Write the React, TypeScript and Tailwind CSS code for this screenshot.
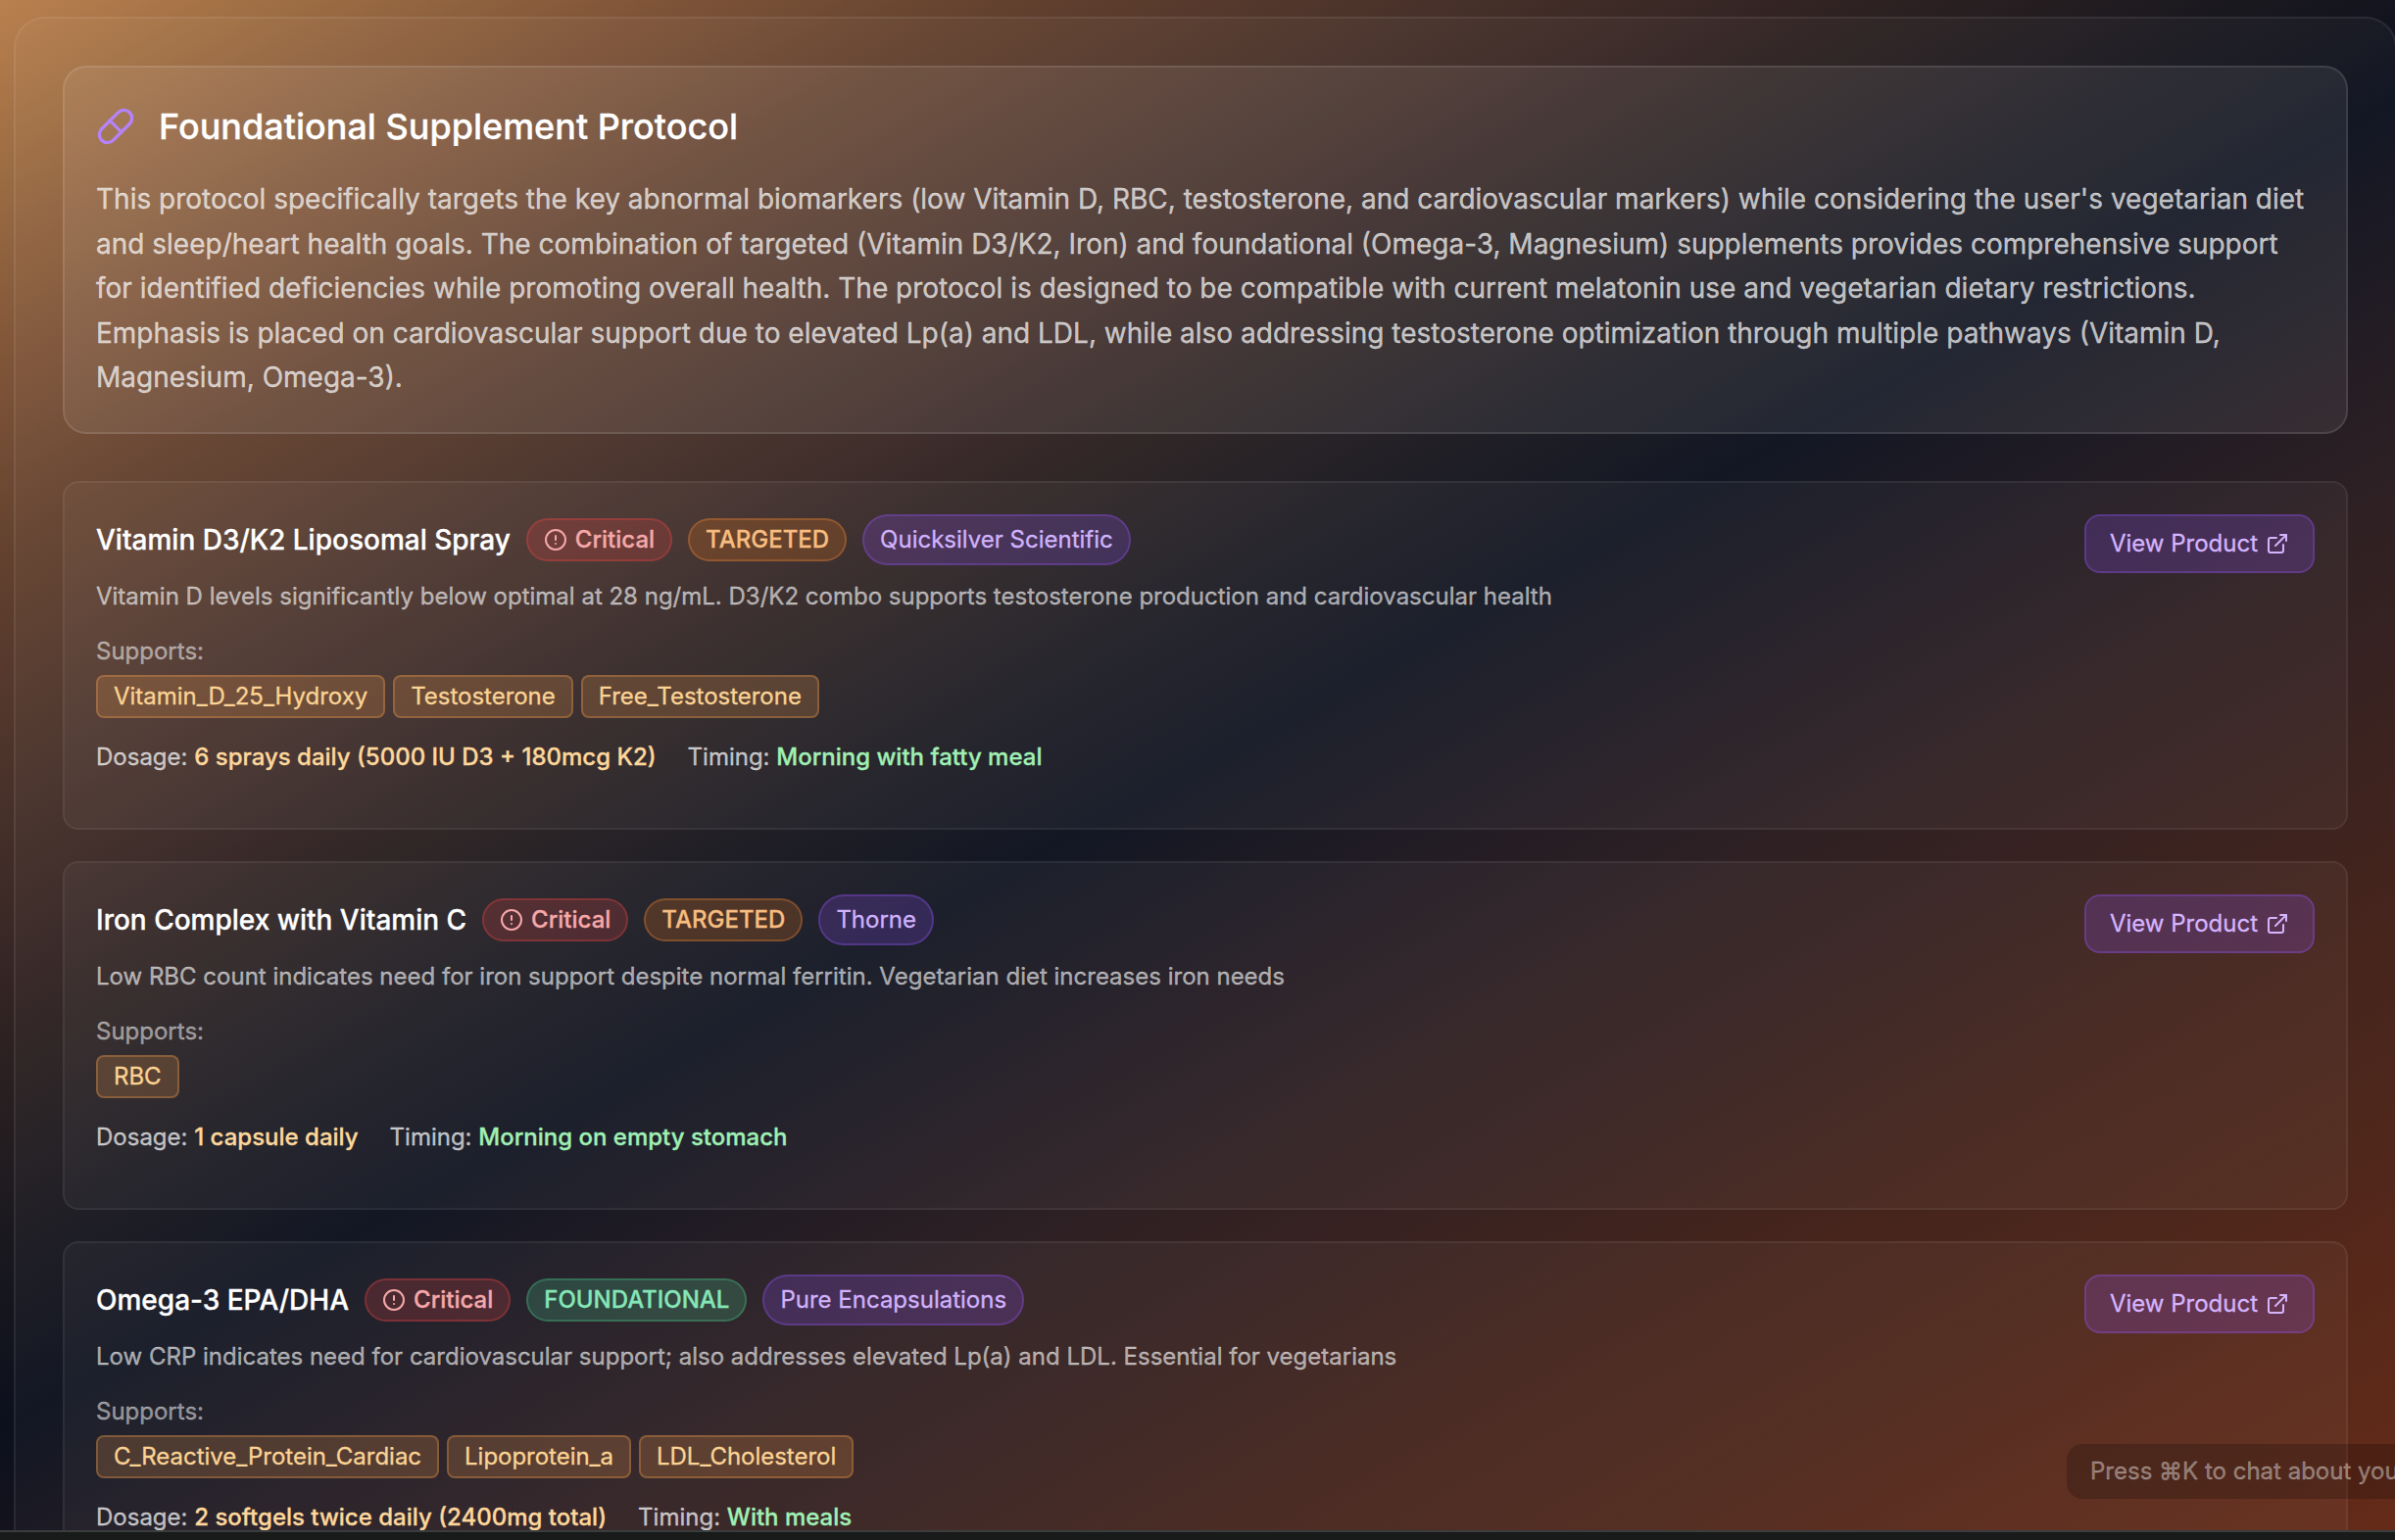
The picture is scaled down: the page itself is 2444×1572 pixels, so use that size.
import React from "react";
import { CircleAlert, ExternalLink, Pill } from "lucide-react";

type Item = {
  name: string;
  kind: "TARGETED" | "FOUNDATIONAL";
  brand: string;
  why: string;
  supports: string[];
  dosage: string;
  timing: string;
};

const items: Item[] = [
  {
    name: "Vitamin D3/K2 Liposomal Spray",
    kind: "TARGETED",
    brand: "Quicksilver Scientific",
    why: "Vitamin D levels significantly below optimal at 28 ng/mL. D3/K2 combo supports testosterone production and cardiovascular health",
    supports: ["Vitamin_D_25_Hydroxy", "Testosterone", "Free_Testosterone"],
    dosage: "6 sprays daily (5000 IU D3 + 180mcg K2)",
    timing: "Morning with fatty meal",
  },
  {
    name: "Iron Complex with Vitamin C",
    kind: "TARGETED",
    brand: "Thorne",
    why: "Low RBC count indicates need for iron support despite normal ferritin. Vegetarian diet increases iron needs",
    supports: ["RBC"],
    dosage: "1 capsule daily",
    timing: "Morning on empty stomach",
  },
  {
    name: "Omega-3 EPA/DHA",
    kind: "FOUNDATIONAL",
    brand: "Pure Encapsulations",
    why: "Low CRP indicates need for cardiovascular support; also addresses elevated Lp(a) and LDL. Essential for vegetarians",
    supports: ["C_Reactive_Protein_Cardiac", "Lipoprotein_a", "LDL_Cholesterol"],
    dosage: "2 softgels twice daily (2400mg total)",
    timing: "With meals",
  },
];

const kindStyle = {
  TARGETED: "bg-[#f97c16]/20 border-[#f98c3c]/30 text-[#f7bd80]",
  FOUNDATIONAL: "bg-[#4ade96]/20 border-[#4ade96]/25 text-[#86e6b8]",
};

function Card({ item }: { item: Item }) {
  return (
    <article className="flex h-[356px] shrink-0 items-start justify-between rounded-2xl border-2 border-white/[0.06] bg-white/[0.04] p-8">
      <div className="flex flex-col">
        <div className="flex h-[52px] items-center gap-4">
          <h3 className="text-[28px] font-medium text-white">{item.name}</h3>
          <span className="flex h-11 items-center gap-2 rounded-full border-2 border-[#ef4444]/30 bg-[#ef4444]/20 px-4 text-2xl font-medium text-[#f5a8a8]">
            <CircleAlert className="size-6" strokeWidth={2} />
            Critical
          </span>
          <span className={`flex h-11 items-center rounded-full border-2 px-4 text-2xl font-medium ${kindStyle[item.kind]}`}>
            {item.kind}
          </span>
          <span className="flex h-[52px] items-center rounded-full border-2 border-[#9855f7]/30 bg-[#8f4cf0]/22 px-4 text-2xl text-[#d0b2fb]">
            {item.brand}
          </span>
        </div>
        <p className="mt-4 text-2xl leading-8 text-white/60">{item.why}</p>
        <p className="mt-6 text-2xl leading-8 text-white/50">Supports:</p>
        <div className="mt-2 flex gap-2">
          {item.supports.map((s) => (
            <span key={s} className="flex h-11 items-center rounded-lg border-2 border-[#f9a04c]/30 bg-[#f9a04c]/20 px-4 text-2xl tracking-[-0.02px] text-[#fbd394]">
              {s}
            </span>
          ))}
        </div>
        <div className="mt-6 flex gap-8 text-2xl leading-8 text-white/70">
          <p>
            Dosage: <span className="font-medium text-[#fdd79b]">{item.dosage}</span>
          </p>
          <p>
            Timing: <span className="font-medium text-[#a0f0b4]">{item.timing}</span>
          </p>
        </div>
      </div>
      <button className="flex h-[60px] items-center gap-2 rounded-2xl border-2 border-[#9855f7]/30 bg-[#8f4cf0]/22 px-6 text-2xl text-[#d4b4fd]">
        View Product
        <ExternalLink className="size-6" strokeWidth={2} />
      </button>
    </article>
  );
}

export default function App() {
  return (
    <div className="relative flex h-[1572px] w-[2444px] flex-col overflow-hidden bg-[#0c0f1c] font-['Inter',sans-serif] [-webkit-text-stroke:0.3px]">
      <main className="h-[1562px] overflow-hidden bg-[linear-gradient(151deg,#b9804e_0%,#9c6c43_6%,#7e5438_13%,#61402e_20%,#48312a_28%,#2f2222_36%,#1b191f_43%,#0c101d_50%,#27191d_63%,#3d1d16_77%,#522213_91%,#5f2511_100%)] pl-3.5 pt-[17px]">
        <section className="flex w-[2432px] flex-col rounded-[32px] border-2 border-white/[0.07] bg-white/[0.03] p-12 pb-40">
          <header className="mb-12 h-[376px] rounded-3xl border-2 border-white/10 bg-white/[0.07] p-8">
            <div className="mb-6 flex h-14 items-center gap-6">
              <Pill className="size-10 text-[#b583f8]" strokeWidth={2} />
              <h2 className="text-4xl font-medium text-white">Foundational Supplement Protocol</h2>
            </div>
            <p className="text-[28px] leading-[45.5px] text-white/70">
              This protocol specifically targets the key abnormal biomarkers (low Vitamin D, RBC, testosterone, and cardiovascular markers) while considering the user's vegetarian diet and sleep/heart health goals. The combination of targeted (Vitamin D3/K2, Iron) and foundational (Omega-3, Magnesium) supplements provides comprehensive support for identified deficiencies while promoting overall health. The protocol is designed to be compatible with current melatonin use and vegetarian dietary restrictions. Emphasis is placed on cardiovascular support due to elevated Lp(a) and LDL, while also addressing testosterone optimization through multiple pathways (Vitamin D, Magnesium, Omega-3).
            </p>
          </header>
          <div className="flex flex-col gap-8">
            {items.map((item) => (
              <Card key={item.name} item={item} />
            ))}
          </div>
        </section>
      </main>
      <footer className="h-2.5 border-t-2 border-[#3a3d3e] bg-[#191b1b]" />
      <div className="absolute left-[2109px] top-[1474px] flex h-14 items-center whitespace-nowrap rounded-2xl bg-black/20 px-6 text-2xl text-white/40">
        Press ⌘K to chat about you
      </div>
    </div>
  );
}
